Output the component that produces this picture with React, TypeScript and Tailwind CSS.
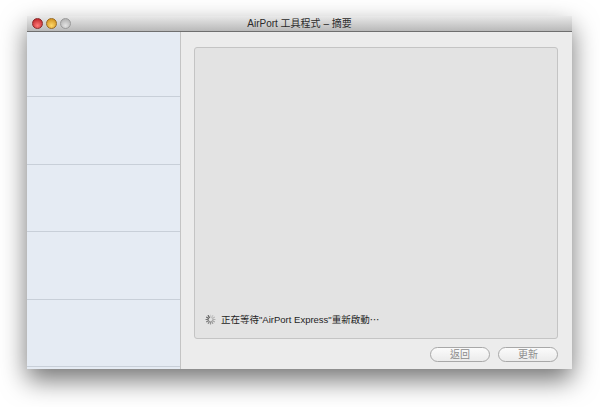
import React from 'react';

const font = { fontFamily: '"Liberation Sans", "Noto Sans CJK TC", sans-serif' };

const Spinner: React.FC = () => (
    <svg width="11" height="11" viewBox="0 0 22 22" className="shrink-0">
        {Array.from({ length: 12 }).map((_, i) => (
            <line
                key={i}
                x1="11"
                y1="2"
                x2="11"
                y2="6.5"
                stroke="#555"
                strokeWidth="2.4"
                strokeLinecap="round"
                opacity={0.15 + (i / 11) * 0.75}
                transform={`rotate(${i * 30} 11 11)`}
            />
        ))}
    </svg>
);

const Light: React.FC<{ from: string; to: string; ring: string }> = ({ from, to, ring }) => (
    <div
        className="w-[11px] h-[11px] rounded-full border"
        style={{ background: `radial-gradient(circle at 50% 72%, ${to}, ${from})`, borderColor: ring }}
    />
);

export default function App() {
    return (
        <div className="w-[600px] h-[407px] bg-white pt-[16px] pl-[27px]" style={font}>
            <div className="w-[545px] h-[353px] flex flex-col shadow-[0_11px_24px_rgba(0,0,0,0.55)]">
                {/* Title bar */}
                <div className="relative h-[16px] shrink-0 bg-gradient-to-b from-[#e9e9e9] to-[#b9b9b9] border-b border-[#6f6f6f] flex items-center">
                    <div className="flex items-center gap-[3px] pl-[5px]">
                        <Light from="#b3161a" to="#ff7a78" ring="#8a2a2a" />
                        <Light from="#c98510" to="#ffd86a" ring="#9a6a20" />
                        <Light from="#a9a9a9" to="#e2e2e2" ring="#9a9a9a" />
                    </div>
                    <div className="absolute inset-0 flex items-center justify-center text-[10px] text-[#2a2a2a]">
                        AirPort 工具程式 – 摘要
                    </div>
                </div>

                {/* Body */}
                <div className="flex flex-1 min-h-0">
                    <div className="w-[154px] shrink-0 bg-[#e5ebf3] border-r border-[#c4c4c4] flex flex-col">
                        <div className="h-[65px] border-b border-[#c8cfd8]" />
                        <div className="h-[68px] border-b border-[#c8cfd8]" />
                        <div className="h-[67px] border-b border-[#c8cfd8]" />
                        <div className="h-[68px] border-b border-[#c8cfd8]" />
                        <div className="h-[67px] border-b border-[#c8cfd8]" />
                    </div>

                    <div className="flex-1 bg-[#ececec] flex flex-col pt-[15px] pl-[13px] pr-[14px]">
                        <div className="h-[292px] bg-[#e3e3e3] border border-[#c4c4c4] rounded-[3px] flex flex-col justify-end pb-[11px] pl-[10px]">
                            <div className="flex items-center gap-[5px] text-[9.5px] text-[#1e1e1e]">
                                <Spinner />
                                <span>正在等待"AirPort Express"重新啟動⋯</span>
                            </div>
                        </div>
                        <div className="flex justify-end gap-[8px] mt-[8px]">
                            <button className="w-[60px] h-[15px] rounded-full border border-[#a8a8a8] bg-gradient-to-b from-[#fbfbfb] to-[#ebebeb] text-[10px] leading-none text-[#8c8c8c]">
                                返回
                            </button>
                            <button className="w-[60px] h-[15px] rounded-full border border-[#a8a8a8] bg-gradient-to-b from-[#fbfbfb] to-[#ebebeb] text-[10px] leading-none text-[#8c8c8c]">
                                更新
                            </button>
                        </div>
                    </div>
                </div>
            </div>
        </div>
    );
}
